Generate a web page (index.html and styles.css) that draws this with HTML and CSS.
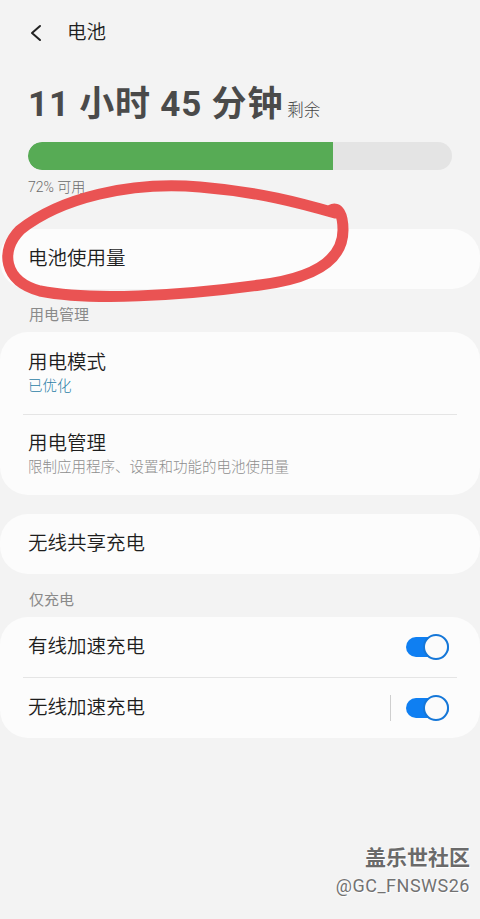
FILE: index.html
```html
<!DOCTYPE html>
<html lang="zh-CN">
<head>
  <meta charset="UTF-8">
  <meta name="viewport" content="width=device-width, initial-scale=1.0">
  <title>电池</title>
  <link rel="stylesheet" href="styles.css">
</head>
<body>
  <div class="screen">
    <header class="appbar">
      <svg class="back" width="14" height="18" viewBox="0 0 14 18">
        <path d="M11 2 L3 9 L11 16" fill="none" stroke="#222" stroke-width="2" stroke-linecap="round" stroke-linejoin="round"/>
      </svg>
      <span class="title">电池</span>
    </header>

    <section class="summary">
      <div class="time">11 小时 45 分钟<span class="left">剩余</span></div>
      <div class="bar"><div class="fill" style="width: 72%;"></div></div>
      <div class="avail">72% 可用</div>
    </section>

    <div class="card card-first">
      <div class="row"><div class="label">电池使用量</div></div>
    </div>

    <div class="section">用电管理</div>
    <div class="card">
      <div class="row tall">
        <div class="label">用电模式</div>
        <div class="sub accent">已优化</div>
      </div>
      <div class="divider"></div>
      <div class="row tall last">
        <div class="label">用电管理</div>
        <div class="sub">限制应用程序、设置和功能的电池使用量</div>
      </div>
    </div>

    <div class="card card-gap">
      <div class="row"><div class="label">无线共享充电</div></div>
    </div>

    <div class="section">仅充电</div>
    <div class="card">
      <div class="row switch-row">
        <div class="label">有线加速充电</div>
        <span class="toggle"></span>
      </div>
      <div class="divider"></div>
      <div class="row switch-row">
        <div class="label">无线加速充电</div>
        <span class="sep"></span>
        <span class="toggle"></span>
      </div>
    </div>

    <svg class="scribble" width="480" height="320" viewBox="0 0 480 320">
      <path d="M335 213 C300 203, 260 192, 200 187 C130 181, 60 198, 20 230 C0 250, 3 281, 40 291 C90 301, 180 296, 260 285 C315 278, 343 260, 343 230 C343 214, 338 206, 331 210"
            fill="none" stroke="#ea5353" stroke-width="11" stroke-linecap="round" stroke-linejoin="round"/>
    </svg>

    <div class="watermark">
      <div class="wm-name">盖乐世社区</div>
      <div class="wm-id">@GC_FNSWS26</div>
    </div>
  </div>
</body>
</html>
```

FILE: styles.css
```css
body {
  margin: 0;
  background-color: #f3f3f3;
  font-family: Roboto, "Noto Sans CJK SC", sans-serif;
  color: #1e1e1e;
}
.screen {
  position: relative;
  width: 480px;
  height: 919px;
  overflow: hidden;
}
.appbar {
  height: 66px;
  display: flex;
  align-items: center;
  padding-left: 29px;
}
.back {
  display: block;
}
.title {
  margin-left: 24px;
  font-size: 19.5px;
  line-height: 24px;
  font-weight: 350;
}
.summary {
  padding: 0 28px;
}
.time {
  margin-top: 14px;
  height: 50px;
  font-size: 35px;
  line-height: 50px;
  font-weight: bold;
  letter-spacing: 0.8px;
  color: #4a4a4a;
  white-space: nowrap;
}
.left {
  margin-left: 4px;
  font-size: 16.5px;
  line-height: 20px;
  font-weight: 300;
  letter-spacing: 0;
  color: #444;
}
.bar {
  margin-top: 12px;
  height: 28px;
  border-radius: 14px;
  background: #e4e4e4;
  overflow: hidden;
}
.fill {
  height: 100%;
  background: #57ab55;
  border-radius: 14px 0 0 14px;
}
.avail {
  margin-top: 8px;
  font-size: 14px;
  line-height: 18px;
  font-weight: 300;
  color: #6a6a6a;
}
.card {
  background: #fcfcfc;
  border-radius: 28px;
  margin-top: 7px;
}
.card-first {
  margin-top: 33px;
}
.card-gap {
  margin-top: 19px;
}
.section {
  margin-top: 15px;
  padding-left: 29px;
  font-size: 15px;
  line-height: 20px;
  color: #8a8a8a;
}
.card + .section {
  margin-top: 16px;
}
.row {
  height: 60px;
  padding: 0 28px;
  display: flex;
  align-items: center;
}
.row.tall {
  height: auto;
  display: block;
  padding: 19px 28px 17px;
}
.row.tall.last {
  padding-top: 17px;
}
.label {
  font-size: 19.5px;
  line-height: 24px;
  font-weight: 350;
}
.sub {
  margin-top: 2px;
  font-size: 14.5px;
  line-height: 20px;
  font-weight: 300;
  color: #8e8e8e;
}
.sub.accent {
  color: #2b7ea6;
}
.divider {
  height: 1px;
  margin: 0 23px;
  background: #e5e5e5;
}
.switch-row {
  padding-right: 31px;
}
.switch-row .label {
  flex: 1;
}
.sep {
  width: 1px;
  height: 26px;
  background: #cfcfcf;
  margin-right: 15px;
}
.toggle {
  position: relative;
  width: 43px;
  height: 20px;
  border-radius: 10px;
  background: #0f7ff2;
}
.toggle::after {
  content: "";
  position: absolute;
  right: 0;
  top: -3px;
  width: 22px;
  height: 22px;
  border: 2px solid #1577d8;
  border-radius: 50%;
  background: #fbfbfb;
}
.scribble {
  position: absolute;
  left: 0;
  top: 0;
  pointer-events: none;
}
.watermark {
  position: absolute;
  right: 10px;
  top: 844px;
  text-align: right;
  color: #727272;
  text-shadow: 0 0 2px #fff, 1px 1px 1px #fff;
}
.wm-name {
  font-size: 21px;
  line-height: 28px;
  font-weight: bold;
  color: #6a6a6a;
}
.wm-id {
  font-size: 18px;
  line-height: 28px;
  letter-spacing: 0.5px;
}
```
